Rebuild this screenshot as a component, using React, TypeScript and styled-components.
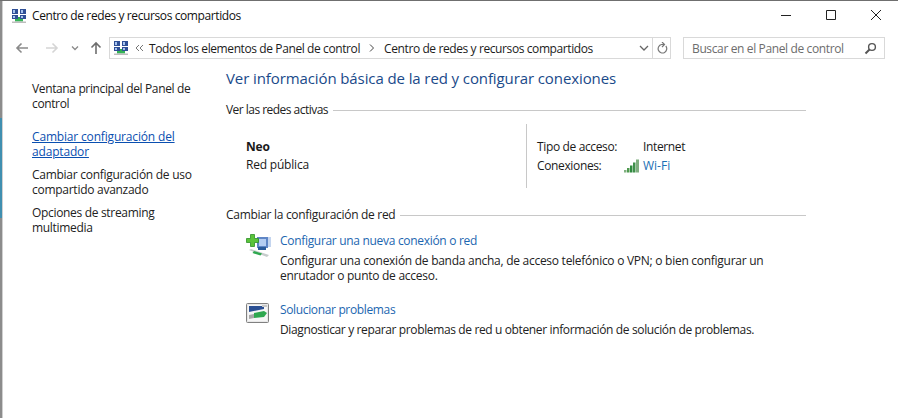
import styled, { createGlobalStyle } from 'styled-components'
import type { ReactNode } from 'react'

const Global = createGlobalStyle`
  html, body {
    margin: 0;
    padding: 0;
    background: #fff;
  }
  body {
    font-family: "Open Sans", "Noto Sans", sans-serif;
    font-size: 12px;
    color: #1a1a1a;
  }
`

const Frame = styled.div`
  width: 898px;
  height: 418px;
  box-sizing: border-box;
  border-top: 1px solid #6f6f6f;
  display: grid;
  grid-template-columns: 3px 1fr;
  overflow: hidden;
`

const Edge = styled.div`
  display: flex;
  flex-direction: column;
  border-right: 1px solid #d0d0d0;
  background: #8c8c8c;
`

const EdgeGap = styled.div`
  height: 117px;
`

const EdgeAccent = styled.div`
  height: 100px;
  background: #3f8fb0;
`

const Window = styled.div`
  display: flex;
  flex-direction: column;
  min-width: 0;
  background: #fff;
`

const TitleBar = styled.div`
  height: 29px;
  margin-bottom: 2px;
  display: flex;
  align-items: center;
  padding-left: 8px;
`

const TitleText = styled.div`
  flex: 1;
  margin-left: 5px;
  letter-spacing: -0.4px;
  color: #111;
`

const Caption = styled.button`
  width: 45px;
  height: 29px;
  border: 0;
  padding: 0 0 1px;
  background: none;
  display: flex;
  align-items: center;
  justify-content: center;
`

const NavBar = styled.div`
  height: 24px;
  margin-top: 4px;
  display: flex;
  align-items: center;
  padding-left: 1px;
`

const NavButton = styled.div<{ $width: number }>`
  width: ${({ $width }) => $width}px;
  height: 22px;
  display: flex;
  align-items: center;
  justify-content: center;
`

const AddressBox = styled.div`
  width: 562px;
  height: 22px;
  box-sizing: border-box;
  margin-left: 3px;
  border: 1px solid #d9d9d9;
  display: flex;
  align-items: center;
  padding-left: 3px;
`

const Crumbs = styled.div`
  flex: 1;
  display: flex;
  align-items: center;
  letter-spacing: -0.4px;
  color: #1c1c1c;
`

const Chevrons = styled.span`
  width: 20px;
  display: flex;
  justify-content: center;
`

const Crumb = styled.span`
  white-space: nowrap;
`

const CrumbArrow = styled.svg`
  margin: 0 9px;
`

const DropArrow = styled.svg`
  margin-right: 3px;
`

const RefreshCell = styled.div`
  width: 17px;
  height: 20px;
  border-left: 1px solid #d9d9d9;
  display: flex;
  align-items: center;
  justify-content: center;
`

const SearchBox = styled.div`
  width: 202px;
  height: 22px;
  box-sizing: border-box;
  margin-left: 12px;
  border: 1px solid #d9d9d9;
  display: flex;
  align-items: center;
  justify-content: space-between;
  padding: 0 7px 0 8px;
  color: #6d6d6d;
  letter-spacing: -0.37px;
`

const Body = styled.div`
  flex: 1;
  display: grid;
  grid-template-columns: 223px 580px;
`

const Sidebar = styled.nav`
  padding: 21px 0 0 29px;
  display: flex;
  flex-direction: column;
`

const SideLink = styled.div<{ $active?: boolean; $gap: number; $track: number }>`
  width: 172px;
  line-height: 15px;
  margin-bottom: ${({ $gap }) => $gap}px;
  letter-spacing: ${({ $track }) => $track}px;
  color: ${({ $active }) => ($active ? '#0a4fb0' : '#222')};
  text-decoration: ${({ $active }) => ($active ? 'underline' : 'none')};
`

const Main = styled.main`
  padding-top: 8px;
  display: flex;
  flex-direction: column;
`

const Heading = styled.h1`
  margin: 0 0 14px;
  font-size: 15px;
  line-height: 20px;
  font-weight: 400;
  letter-spacing: -0.1px;
  color: #1a4a8a;
`

const SectionHead = styled.div<{ $track: number }>`
  display: flex;
  align-items: center;
  gap: 5px;
  line-height: 16px;
  letter-spacing: ${({ $track }) => $track}px;
  color: #222;

  &::after {
    content: '';
    flex: 1;
    height: 1px;
    background: #c8c8c8;
  }
`

const NetworkRow = styled.div`
  height: 64px;
  margin-top: 6px;
  display: grid;
  grid-template-columns: 300px 1fr;
`

const NetworkName = styled.div`
  padding: 14px 0 0 20px;
  line-height: 18px;
  letter-spacing: -0.2px;
`

const Strong = styled.div`
  font-weight: 700;
`

const Props = styled.div`
  border-left: 1px solid #c8c8c8;
  padding: 14px 0 0 10px;
  display: grid;
  grid-template-columns: 106px 1fr;
  grid-auto-rows: 19px;
  letter-spacing: -0.36px;
`

const WifiLink = styled.span`
  display: inline-flex;
  align-items: center;
  gap: 3px;
  margin-left: -19px;
  letter-spacing: 0;
  color: #1c6fb5;
`

const Task = styled.div<{ $gap: number }>`
  display: grid;
  grid-template-columns: 54px 1fr;
  margin-bottom: ${({ $gap }) => $gap}px;
`

const TaskIcon = styled.div`
  padding: 2px 0 0 20px;
`

const TaskTitle = styled.div<{ $track: number }>`
  line-height: 17px;
  letter-spacing: ${({ $track }) => $track}px;
  color: #1c66b0;
`

const TaskText = styled.div<{ $track: number }>`
  margin-top: 4px;
  width: 490px;
  line-height: 15px;
  letter-spacing: ${({ $track }) => $track}px;
  color: #222;
`

const ChangeHead = styled.div`
  margin-top: 19px;
  margin-bottom: 9px;
`

function NetIcon({ size }: { size: number }) {
  return (
    <svg width={size} height={size} viewBox="0 0 16 16">
      <rect x="1" y="1" width="6" height="5" fill="#2f4f96" />
      <rect x="9" y="1" width="6" height="5" fill="#2f4f96" />
      <rect x="2" y="2" width="2" height="3" fill="#a8c4ee" />
      <rect x="10" y="2" width="2" height="3" fill="#a8c4ee" />
      <rect x="1" y="7" width="6" height="4" fill="#2f4f96" />
      <rect x="9" y="7" width="6" height="4" fill="#2f4f96" />
      <rect x="2" y="8" width="2" height="2" fill="#a8c4ee" />
      <rect x="10" y="8" width="2" height="2" fill="#a8c4ee" />
      <rect x="7" y="9" width="2" height="4" fill="#2fa84f" />
      <rect x="4" y="11" width="8" height="2.5" fill="#34b356" />
      <rect x="1" y="13.5" width="14" height="1.5" fill="#bdbdbd" />
    </svg>
  )
}

function SignalIcon() {
  return (
    <svg width="16" height="14" viewBox="0 0 16 14">
      <rect x="0" y="11" width="2.5" height="2.5" fill="#7fb07f" />
      <rect x="3" y="9" width="2.5" height="4.5" fill="#4f9a4f" />
      <rect x="6" y="6.5" width="2.5" height="7" fill="#2f8a3f" />
      <rect x="9" y="3.5" width="2.5" height="10" fill="#3f8f4a" />
      <rect x="12" y="0.5" width="3" height="13" fill="#7fae7f" />
    </svg>
  )
}

function NewConnectionIcon() {
  return (
    <svg width="26" height="24" viewBox="0 0 26 24">
      <rect x="16" y="3" width="9" height="10" fill="#c4d5ef" />
      <rect x="11" y="3" width="11" height="11" fill="#5f86c6" />
      <rect x="13" y="5" width="7" height="7" fill="#b4cdf2" />
      <rect x="12" y="13" width="8" height="3" fill="#2a5a9a" />
      <path d="M4.5 0.5h4v4h4v4h-4v4h-4v-4h-4v-4h4z" fill="#5ac43a" stroke="#2f8f28" strokeWidth="0.8" />
      <path d="M3 16l2-1 18 6-2 2z" fill="#c6cccc" />
      <path d="M8 17l8 2.6-1.5 2-8-2.6z" fill="#2fa84f" />
    </svg>
  )
}

function TroubleshootIcon() {
  return (
    <svg width="23" height="20" viewBox="0 0 23 20">
      <rect x="0.5" y="0.5" width="22" height="19" rx="1" fill="#e8e8e8" stroke="#808080" />
      <rect x="2" y="2" width="19" height="16" fill="#f6f6f6" />
      <path d="M3 3h15v3L3 9z" fill="#2a4f93" />
      <path d="M16 2h5v2h-5z" fill="#c8c8c8" />
      <path d="M8 10l10-2 3 2-3 4-10 1z" fill="#2fa84f" />
      <path d="M3 12l5-1v4l-5 1z" fill="#a8a8a8" />
    </svg>
  )
}

const Line = ({ d, color = '#8a8a8a', w = 1.6 }: { d: string; color?: string; w?: number }) => (
  <svg width="16" height="16" viewBox="0 0 16 16" fill="none">
    <path d={d} stroke={color} strokeWidth={w} />
  </svg>
)

function Row({ title, text, gap, titleTrack, textTrack, children }: {
  title: string
  text: string
  gap: number
  titleTrack: number
  textTrack: number
  children: ReactNode
}) {
  return (
    <Task $gap={gap}>
      <TaskIcon>{children}</TaskIcon>
      <div>
        <TaskTitle $track={titleTrack}>{title}</TaskTitle>
        <TaskText $track={textTrack}>{text}</TaskText>
      </div>
    </Task>
  )
}

export default function App() {
  return (
    <>
      <Global />
      <Frame>
        <Edge>
          <EdgeGap />
          <EdgeAccent />
        </Edge>
        <Window>
          <TitleBar>
            <NetIcon size={16} />
            <TitleText>Centro de redes y recursos compartidos</TitleText>
            <Caption><Line d="M3 8.5h10" color="#222" w={1} /></Caption>
            <Caption><Line d="M3.5 3.5h9v9h-9z" color="#222" w={1} /></Caption>
            <Caption><Line d="M3 3l10 10M13 3L3 13" color="#222" w={1} /></Caption>
          </TitleBar>
          <NavBar>
            <NavButton $width={36}><Line d="M14 8H3M7.5 3.5L3 8l4.5 4.5" /></NavButton>
            <NavButton $width={24}><Line d="M2 8h11M8.5 3.5L13 8l-4.5 4.5" color="#d5d5d5" /></NavButton>
            <NavButton $width={22}>
              <svg width="8" height="6" viewBox="0 0 8 6" fill="none"><path d="M1 1.5L4 4.5 7 1.5" stroke="#8a8a8a" strokeWidth="1.3" /></svg>
            </NavButton>
            <NavButton $width={20}><Line d="M8 14V3M3.5 7.5L8 3l4.5 4.5" color="#6e6e6e" /></NavButton>
            <AddressBox>
              <NetIcon size={16} />
              <Crumbs>
                <Chevrons>
                  <svg width="9" height="8" viewBox="0 0 9 8" fill="none"><path d="M4 1L1 4l3 3M8 1L5 4l3 3" stroke="#777" /></svg>
                </Chevrons>
                <Crumb>Todos los elementos de Panel de control</Crumb>
                <CrumbArrow width="6" height="8" viewBox="0 0 6 8" fill="none"><path d="M1 0.5L4.5 4 1 7.5" stroke="#444" /></CrumbArrow>
                <Crumb>Centro de redes y recursos compartidos</Crumb>
              </Crumbs>
              <DropArrow width="10" height="6" viewBox="0 0 10 6" fill="none"><path d="M1 1l4 4 4-4" stroke="#666" strokeWidth="1.3" /></DropArrow>
              <RefreshCell>
                <svg width="12" height="13" viewBox="0 0 12 13" fill="none"><path d="M9.8 4A4.3 4.3 0 1 1 5.5 2.5H8M6 0l2.5 2.5L6 5" stroke="#777" strokeWidth="1.2" /></svg>
              </RefreshCell>
            </AddressBox>
            <SearchBox>
              <span>Buscar en el Panel de control</span>
              <svg width="13" height="13" viewBox="0 0 13 13" fill="none"><circle cx="8" cy="5" r="3.4" stroke="#555" strokeWidth="1.4" /><path d="M5.5 7.5L1.5 11.5" stroke="#555" strokeWidth="2" /></svg>
            </SearchBox>
          </NavBar>
          <Body>
            <Sidebar>
              <SideLink $gap={18} $track={-0.37}>Ventana principal del Panel de control</SideLink>
              <SideLink $gap={8} $track={-0.17} $active>Cambiar configuración del adaptador</SideLink>
              <SideLink $gap={8} $track={-0.27}>Cambiar configuración de uso compartido avanzado</SideLink>
              <SideLink $gap={0} $track={-0.32}>Opciones de streaming multimedia</SideLink>
            </Sidebar>
            <Main>
              <Heading>Ver información básica de la red y configurar conexiones</Heading>
              <SectionHead $track={-0.53}>Ver las redes activas</SectionHead>
              <NetworkRow>
                <NetworkName>
                  <Strong>Neo</Strong>
                  <div>Red pública</div>
                </NetworkName>
                <Props>
                  <div>Tipo de acceso:</div>
                  <div>Internet</div>
                  <div>Conexiones:</div>
                  <div><WifiLink><SignalIcon />Wi-Fi</WifiLink></div>
                </Props>
              </NetworkRow>
              <ChangeHead><SectionHead $track={-0.3}>Cambiar la configuración de red</SectionHead></ChangeHead>
              <Row
                title="Configurar una nueva conexión o red"
                text="Configurar una conexión de banda ancha, de acceso telefónico o VPN; o bien configurar un enrutador o punto de acceso."
                gap={18}
                titleTrack={-0.31}
                textTrack={-0.27}
              >
                <NewConnectionIcon />
              </Row>
              <Row
                title="Solucionar problemas"
                text="Diagnosticar y reparar problemas de red u obtener información de solución de problemas."
                gap={0}
                titleTrack={-0.35}
                textTrack={-0.37}
              >
                <TroubleshootIcon />
              </Row>
            </Main>
          </Body>
        </Window>
      </Frame>
    </>
  )
}
